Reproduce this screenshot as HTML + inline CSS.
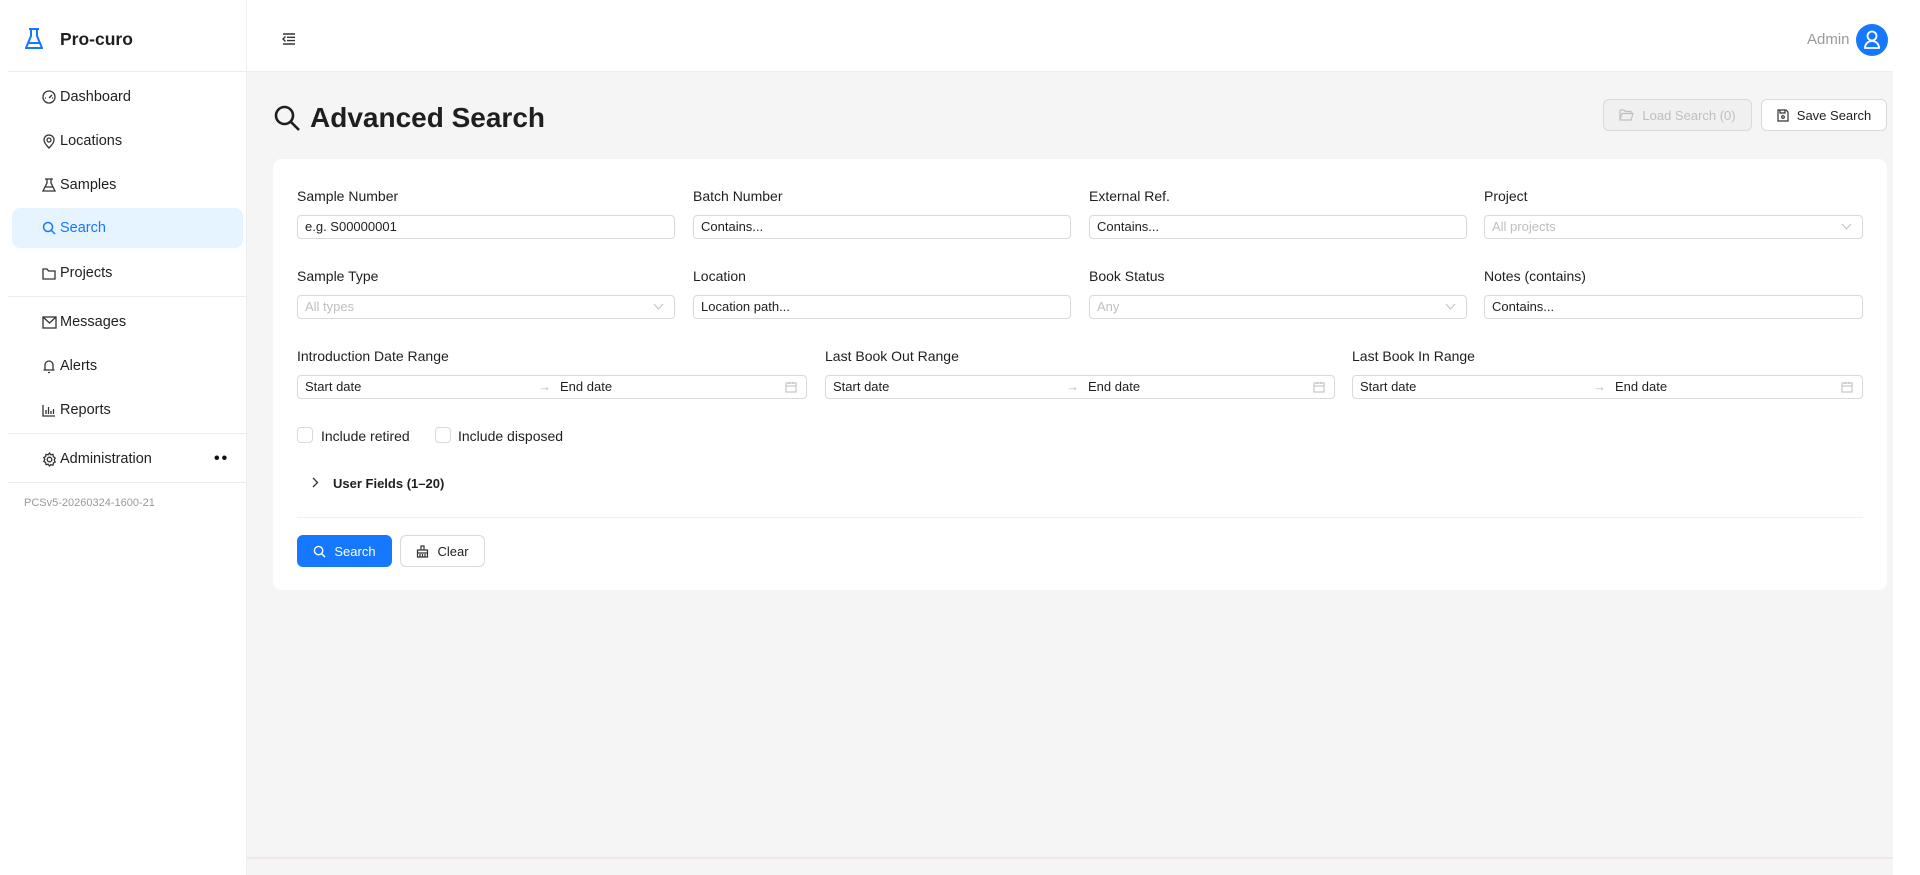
<!DOCTYPE html>
<html><head><meta charset="utf-8"><style>
*{box-sizing:border-box;margin:0;padding:0}
body{width:1920px;height:875px;overflow:hidden;font-family:"Liberation Sans",sans-serif;color:#1f1f1f;background:#fff;position:relative;font-size:14px}
.side{position:absolute;left:0;top:0;width:247px;height:875px;background:#fff;border-right:1px solid #eee}
.logo{position:absolute;left:25px;top:28px;display:flex;align-items:center}
.logo span{font-size:17.5px;font-weight:600;margin-left:17px;color:#1f1f1f}
.hr{position:absolute;left:8px;right:0;height:1px;background:#ececec}
.nav{position:absolute;left:12px;width:231px;height:40px;display:flex;align-items:center;font-size:14.5px;color:#1f1f1f}
.nav svg{position:absolute;left:30px}
.nav span{position:absolute;left:48px}
.nav.act{background:#e6f4ff;border-radius:8px;color:#1677ff}
.ver{position:absolute;left:24px;top:497px;font-size:11px;color:#999}
.top{position:absolute;left:247px;top:0;width:1646px;height:72px;background:#fff;border-bottom:1px solid #eee}
.main{position:absolute;left:247px;top:72px;width:1646px;height:803px;background:#f5f5f5}
.title{position:absolute;left:273px;top:102px;display:flex;align-items:center;font-size:28px;font-weight:600}
.btn{position:absolute;height:32px;border:1px solid #d9d9d9;border-radius:6px;background:#fff;display:flex;align-items:center;justify-content:center;font-size:13px;gap:8px}
.card{position:absolute;left:273px;top:159px;width:1614px;height:431px;background:#fff;border-radius:8px}
.lbl{position:absolute;font-size:14px;color:#1f1f1f}
.inp{position:absolute;height:24px;border:1px solid #d9d9d9;border-radius:4px;background:#fff;font-size:13px;padding-left:7px;line-height:22px;color:#1f1f1f}
.ph{color:#bfbfbf}
.chev{position:absolute;right:10px;top:7px}
.cb{position:absolute;width:16px;height:16px;border:1px solid #d9d9d9;border-radius:4px;background:#fff}
</style></head><body>
<div class="side">
 <div class="logo"><svg width="18" height="22" viewBox="0 0 18 22" fill="none" stroke="#1677ff" stroke-width="2"><path d="M4 1h10M6 1v7L1 20h16L12 8V1M3 15h12"/></svg><span>Pro-curo</span></div>
 <div class="hr" style="top:71px"></div>
 <div class="nav" style="top:77px"><svg width="14" height="14" viewBox="0 0 14 14" fill="none" stroke="#333" stroke-width="1.3"><circle cx="7" cy="7" r="6"/><path d="M7 8l3-3M3 8h1M10 8h1"/></svg><span>Dashboard</span></div>
 <div class="nav" style="top:121px"><svg width="14" height="15" viewBox="0 0 14 15" fill="none" stroke="#333" stroke-width="1.3"><path d="M7 14C3 10 2 8 2 6a5 5 0 0110 0c0 2-1 4-5 8z"/><circle cx="7" cy="6" r="2"/></svg><span>Locations</span></div>
 <div class="nav" style="top:165px"><svg width="14" height="14" viewBox="0 0 14 14" fill="none" stroke="#333" stroke-width="1.3"><path d="M3 1h8M5 1v4L1 13h12L9 5V1M3 9h8"/></svg><span>Samples</span></div>
 <div class="nav act" style="top:208px"><svg width="14" height="14" viewBox="0 0 14 14" fill="none" stroke="#1677ff" stroke-width="1.5"><circle cx="6" cy="6" r="4.5"/><path d="M9.5 9.5L13 13"/></svg><span>Search</span></div>
 <div class="nav" style="top:253px"><svg width="14" height="13" viewBox="0 0 14 13" fill="none" stroke="#333" stroke-width="1.3"><path d="M1 2h4l1.5 2H13v8H1z"/></svg><span>Projects</span></div>
 <div class="hr" style="top:296px"></div>
 <div class="nav" style="top:302px"><svg width="15" height="13" viewBox="0 0 15 13" fill="none" stroke="#333" stroke-width="1.3"><rect x="1" y="1" width="13" height="11"/><path d="M1 1l6.5 6L14 1"/></svg><span>Messages</span></div>
 <div class="nav" style="top:346px"><svg width="14" height="15" viewBox="0 0 14 15" fill="none" stroke="#333" stroke-width="1.3"><path d="M3 11V6a4 4 0 018 0v5M1.5 11h11M6 13.5h2"/></svg><span>Alerts</span></div>
 <div class="nav" style="top:390px"><svg width="14" height="13" viewBox="0 0 14 13" fill="none" stroke="#333" stroke-width="1.3"><path d="M1 1v11h12M4 10V6M6.5 10V3M9 10V7M11.5 10V5"/></svg><span>Reports</span></div>
 <div class="hr" style="top:433px"></div>
 <div class="nav" style="top:439px"><svg width="15" height="15" viewBox="0 0 15 15" fill="none" stroke="#333" stroke-width="1.3"><circle cx="7.5" cy="7.5" r="2.3"/><path d="M7.5 1l1.3 1.8 2.2-.4.4 2.2L13.2 6l-1 2 1 2-1.8.9-.4 2.2-2.2-.4L7.5 14l-1.3-1.8-2.2.4-.4-2.2L1.8 9.5l1-2-1-2 1.8-.9.4-2.2 2.2.4z"/></svg><span>Administration</span><b style="position:absolute;left:202px;top:11px;font-size:16px;letter-spacing:2px;color:#111">••</b></div>
 <div class="hr" style="top:482px"></div>
 <div class="ver">PCSv5-20260324-1600-21</div>
</div>
<div class="top">
 <svg style="position:absolute;left:35px;top:33px" width="14" height="12" viewBox="0 0 14 12" fill="none" stroke="#333" stroke-width="1.4"><path d="M1 1h12M5 4.3h8M5 7.6h8M1 11h12M3.5 3.5L1 6l2.5 2.5"/></svg>
 <div style="position:absolute;left:1560px;top:31px;font-size:15px;color:#999">Admin</div>
 <div style="position:absolute;left:1609px;top:24px;width:32px;height:32px;border-radius:50%;background:#1677ff"><svg width="32" height="32" viewBox="0 0 32 32" fill="none" stroke="#fff" stroke-width="1.8"><circle cx="16" cy="12" r="4.5"/><path d="M9 24a7 7 0 0114 0z"/></svg></div>
</div>
<div class="main"><div style="position:absolute;left:0;right:0;bottom:16px;height:2px;background:#f5e6e3"></div></div>
<div class="title"><svg width="28" height="28" viewBox="0 0 28 28" fill="none" stroke="#1f1f1f" stroke-width="2.6"><circle cx="11.5" cy="11.5" r="8.5"/><path d="M18 18l8 8"/></svg><span style="margin-left:9px">Advanced Search</span></div>
<div class="btn" style="left:1603px;top:99px;width:149px;background:#f0f0f0;color:#bfbfbf"><svg width="15" height="12" viewBox="0 0 15 12" fill="none" stroke="#bfbfbf" stroke-width="1.2"><path d="M1 1h4l1.5 1.5H12v2M1 1v10h11l2-6.5H3L1 11"/></svg>Load Search (0)</div>
<div class="btn" style="left:1761px;top:99px;width:126px"><svg width="12" height="13" viewBox="0 0 12 13" fill="none" stroke="#333" stroke-width="1.2"><path d="M1 1h8l2 2v9H1zM3 1v3h5V1"/><circle cx="6" cy="8" r="1.3"/></svg>Save Search</div>
<div class="card"></div>
<div class="lbl" style="left:297px;top:188px">Sample Number</div>
<div class="lbl" style="left:693px;top:188px">Batch Number</div>
<div class="lbl" style="left:1089px;top:188px">External Ref.</div>
<div class="lbl" style="left:1484px;top:188px">Project</div>
<div class="inp" style="left:297px;top:215px;width:378px">e.g. S00000001</div>
<div class="inp" style="left:693px;top:215px;width:378px">Contains...</div>
<div class="inp" style="left:1089px;top:215px;width:378px">Contains...</div>
<div class="inp ph" style="left:1484px;top:215px;width:379px">All projects<svg class="chev" width="11" height="7" viewBox="0 0 11 7" fill="none" stroke="#bfbfbf"><path d="M1 1l4.5 5L10 1"/></svg></div>
<div class="lbl" style="left:297px;top:268px">Sample Type</div>
<div class="lbl" style="left:693px;top:268px">Location</div>
<div class="lbl" style="left:1089px;top:268px">Book Status</div>
<div class="lbl" style="left:1484px;top:268px">Notes (contains)</div>
<div class="inp ph" style="left:297px;top:295px;width:378px">All types<svg class="chev" width="11" height="7" viewBox="0 0 11 7" fill="none" stroke="#bfbfbf"><path d="M1 1l4.5 5L10 1"/></svg></div>
<div class="inp" style="left:693px;top:295px;width:378px">Location path...</div>
<div class="inp ph" style="left:1089px;top:295px;width:378px">Any<svg class="chev" width="11" height="7" viewBox="0 0 11 7" fill="none" stroke="#bfbfbf"><path d="M1 1l4.5 5L10 1"/></svg></div>
<div class="inp" style="left:1484px;top:295px;width:379px">Contains...</div>
<div class="lbl" style="left:297px;top:348px">Introduction Date Range</div>
<div class="lbl" style="left:825px;top:348px">Last Book Out Range</div>
<div class="lbl" style="left:1352px;top:348px">Last Book In Range</div>
<div class="inp" style="left:297px;top:375px;width:510px">Start date<span style="position:absolute;left:240px;color:#bbb">→</span><span style="position:absolute;left:262px">End date</span><svg style="position:absolute;right:9px;top:5px" width="12" height="12" viewBox="0 0 12 12" fill="none" stroke="#bbb"><rect x="1" y="2" width="10" height="9"/><path d="M1 5h10M4 1v2M8 1v2"/></svg></div>
<div class="inp" style="left:825px;top:375px;width:510px">Start date<span style="position:absolute;left:240px;color:#bbb">→</span><span style="position:absolute;left:262px">End date</span><svg style="position:absolute;right:9px;top:5px" width="12" height="12" viewBox="0 0 12 12" fill="none" stroke="#bbb"><rect x="1" y="2" width="10" height="9"/><path d="M1 5h10M4 1v2M8 1v2"/></svg></div>
<div class="inp" style="left:1352px;top:375px;width:511px">Start date<span style="position:absolute;left:240px;color:#bbb">→</span><span style="position:absolute;left:262px">End date</span><svg style="position:absolute;right:9px;top:5px" width="12" height="12" viewBox="0 0 12 12" fill="none" stroke="#bbb"><rect x="1" y="2" width="10" height="9"/><path d="M1 5h10M4 1v2M8 1v2"/></svg></div>
<div class="cb" style="left:297px;top:427px"></div><div class="lbl" style="left:321px;top:428px">Include retired</div>
<div class="cb" style="left:435px;top:427px"></div><div class="lbl" style="left:458px;top:428px">Include disposed</div>
<svg style="position:absolute;left:312px;top:477px" width="7" height="11" viewBox="0 0 7 11" fill="none" stroke="#333" stroke-width="1.3"><path d="M1 1l4.5 4.5L1 10"/></svg>
<div class="lbl" style="left:333px;top:476px;font-weight:700;font-size:13px">User Fields (1–20)</div>
<div style="position:absolute;left:297px;top:517px;width:1566px;height:1px;background:#f0f0f0"></div>
<div class="btn" style="left:297px;top:535px;width:95px;background:#1677ff;border-color:#1677ff;color:#fff"><svg width="13" height="13" viewBox="0 0 14 14" fill="none" stroke="#fff" stroke-width="1.5"><circle cx="6" cy="6" r="4.5"/><path d="M9.5 9.5L13 13"/></svg>Search</div>
<div class="btn" style="left:400px;top:535px;width:85px"><svg width="13" height="13" viewBox="0 0 13 13" fill="none" stroke="#333" stroke-width="1.2"><path d="M5 1h3v4H5zM1.5 5h10v7h-10zM1.5 8h10M4 9v3M6.5 9v3M9 9v3"/></svg>Clear</div>
</body></html>
